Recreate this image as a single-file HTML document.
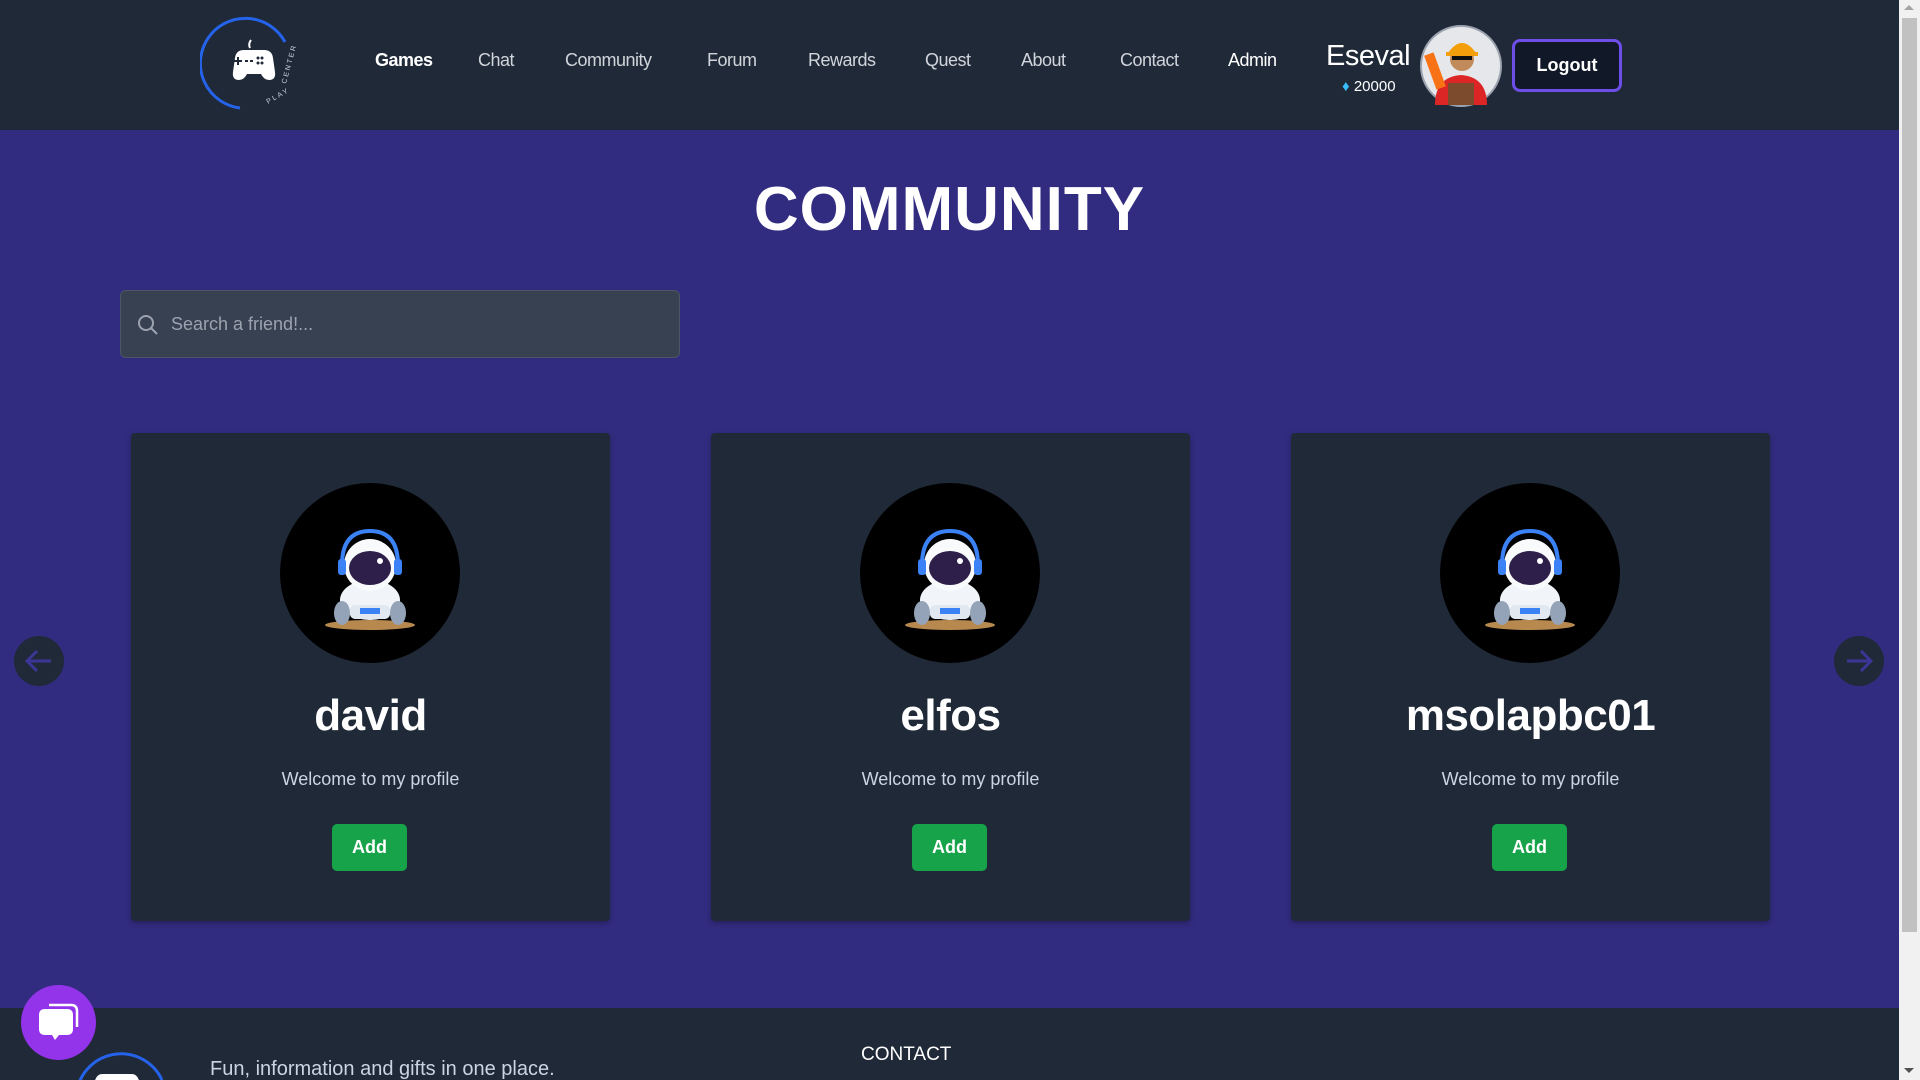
<!DOCTYPE html>
<html style="overflow:hidden;width:1920px;height:1080px"><head><meta charset="utf-8"><style>
*{margin:0;padding:0;box-sizing:border-box}
body{width:1920px;height:1080px;overflow:hidden;background:#322c80;font-family:"Liberation Sans",sans-serif;position:relative}
.hdr{position:absolute;left:0;top:0;width:1899px;height:130px;background:#1f2937}
.nav{position:absolute;top:50px;font-size:18px;color:#d1d5db;letter-spacing:-0.5px}
.nav.b{color:#fff;font-weight:bold}
.card{position:absolute;top:433px;width:479px;height:488px;background:#1f2937;border-radius:4px;box-shadow:0 2px 6px rgba(0,0,0,.3)}
.av{position:absolute;left:149px;top:50px;width:180px;height:180px;border-radius:50%;background:#000;overflow:hidden}
.nm{position:absolute;top:258px;width:100%;text-align:center;color:#fff;font-size:44px;font-weight:bold;letter-spacing:-0.5px}
.wl{position:absolute;top:336px;width:100%;text-align:center;color:#cbd5e1;font-size:18px}
.add{position:absolute;left:201px;top:391px;width:75px;height:47px;background:#16a34a;border-radius:5px;color:#fff;font-weight:bold;font-size:18px;text-align:center;line-height:47px}
.arr{position:absolute;top:636px;width:50px;height:50px;border-radius:50%;background:#1f2937}
</style></head><body>
<div class="hdr">
<svg style="position:absolute;left:200px;top:14px" width="100" height="100" viewBox="0 0 100 100">
<path d="M 85 28 A 45 45 0 1 0 40 94" fill="none" stroke="#2563eb" stroke-width="3"/>
<text x="68" y="90" fill="#cbd5e1" font-size="7" font-family="Liberation Sans" letter-spacing="2" transform="rotate(-30 68 90)">PLAY</text>
<text x="86" y="70" fill="#cbd5e1" font-size="7" font-family="Liberation Sans" letter-spacing="2" transform="rotate(-75 86 70)">CENTER</text>
<path d="M50 34 q-2 -4 1 -8" stroke="#fff" stroke-width="2" fill="none"/>
<path d="M36 36 h28 q8 0 9 8 l2 14 q1 8 -6 8 q-5 0 -8 -6 h-14 q-3 6 -8 6 q-7 0 -6 -8 l2 -14 q1 -8 9 -8z" fill="#fff"/>
<path d="M34 47 h8 M38 43 v8" stroke="#1f2937" stroke-width="2"/>
<rect x="45" y="46" width="3" height="2" fill="#1f2937"/><rect x="50" y="46" width="3" height="2" fill="#1f2937"/>
<circle cx="58" cy="44" r="1.5" fill="#1f2937"/><circle cx="62" cy="44" r="1.5" fill="#1f2937"/><circle cx="58" cy="49" r="1.5" fill="#1f2937"/><circle cx="62" cy="49" r="1.5" fill="#1f2937"/>
</svg>
<div class="nav b" style="left:375px">Games</div>
<div class="nav" style="left:478px">Chat</div>
<div class="nav" style="left:565px">Community</div>
<div class="nav" style="left:707px">Forum</div>
<div class="nav" style="left:808px">Rewards</div>
<div class="nav" style="left:925px">Quest</div>
<div class="nav" style="left:1021px">About</div>
<div class="nav" style="left:1120px">Contact</div>
<div class="nav" style="left:1228px;color:#fff">Admin</div>
<div style="position:absolute;left:1326px;top:40px;color:#fff;font-size:29px;letter-spacing:-0.5px">Eseval</div>
<div style="position:absolute;left:1342px;top:78px;color:#fff;font-size:15px"><span style="color:#38bdf8">&#9830;</span> 20000</div>
<svg style="position:absolute;left:1420px;top:25px" width="82" height="82" viewBox="0 0 82 82">
<circle cx="41" cy="41" r="40" fill="#e5e7eb" stroke="#9ca3af" stroke-width="2"/>
<path d="M15 80 q0 -28 26 -30 q26 2 26 30z" fill="#dc2626"/>
<path d="M28 80 v-22 h26 v22z" fill="#7c4a2d"/>
<circle cx="42" cy="34" r="12" fill="#c08a5b"/>
<path d="M28 28 q14 -20 28 0z" fill="#f59e0b"/><rect x="26" y="27" width="32" height="4" fill="#f59e0b"/>
<rect x="32" y="31" width="20" height="4" fill="#111"/>
<rect x="10" y="28" width="10" height="36" fill="#f97316" transform="rotate(-20 15 46)"/>
</svg>
<div style="position:absolute;left:1512px;top:39px;width:110px;height:53px;border-radius:8px;border:3px solid #6d4ee8;background:#111827;color:#fff;font-weight:bold;font-size:18px;text-align:center;line-height:47px">Logout</div>
</div>

<div style="position:absolute;left:0;top:174px;width:1899px;text-align:center;color:#fff;font-size:62px;font-weight:bold;letter-spacing:1px;line-height:72px">COMMUNITY</div>

<div style="position:absolute;left:120px;top:290px;width:560px;height:68px;background:#374151;border:1px solid #4b5563;border-radius:6px">
<svg style="position:absolute;left:15px;top:22px" width="24" height="24" viewBox="0 0 24 24"><circle cx="10" cy="10" r="7" fill="none" stroke="#9ca3af" stroke-width="2"/><path d="M15 15l6 6" stroke="#9ca3af" stroke-width="2"/></svg>
<div style="position:absolute;left:50px;top:23px;color:#9ca3af;font-size:18px">Search a friend!...</div>
</div>

<svg width="0" height="0" style="position:absolute"><defs><g id="astro">
<ellipse cx="90" cy="142" rx="45" ry="5" fill="#b8894e"/>
<ellipse cx="90" cy="117" rx="30" ry="20" fill="#f1f5f9"/>
<rect x="70" y="122" width="40" height="14" rx="5" fill="#e2e8f0"/><rect x="80" y="125" width="20" height="6" fill="#3b82f6"/>
<ellipse cx="62" cy="130" rx="8" ry="12" fill="#94a3b8"/><ellipse cx="118" cy="130" rx="8" ry="12" fill="#94a3b8"/>
<circle cx="90" cy="82" r="26" fill="#f8fafc"/>
<ellipse cx="90" cy="85" rx="21" ry="17" fill="#2e1f4a"/>
<path d="M62 82 q0 -34 28 -34 q28 0 28 34" fill="none" stroke="#3b82f6" stroke-width="4"/>
<rect x="58" y="76" width="8" height="16" rx="3" fill="#3b82f6"/><rect x="114" y="76" width="8" height="16" rx="3" fill="#3b82f6"/>
<circle cx="100" cy="78" r="3" fill="#fff"/>
</g></defs></svg>

<div class="card" style="left:131px"><div class="av"><svg width="180" height="180"><use href="#astro"/></svg></div><div class="nm">david</div><div class="wl">Welcome to my profile</div><div class="add">Add</div></div>
<div class="card" style="left:711px"><div class="av"><svg width="180" height="180"><use href="#astro"/></svg></div><div class="nm">elfos</div><div class="wl">Welcome to my profile</div><div class="add">Add</div></div>
<div class="card" style="left:1291px"><div class="av"><svg width="180" height="180"><use href="#astro"/></svg></div><div class="nm">msolapbc01</div><div class="wl">Welcome to my profile</div><div class="add">Add</div></div>

<div class="arr" style="left:14px"><svg width="50" height="50" viewBox="0 0 50 50"><path d="M37 25H14M23 15l-10 10 10 10" fill="none" stroke="#3b3596" stroke-width="3"/></svg></div>
<div class="arr" style="left:1834px"><svg width="50" height="50" viewBox="0 0 50 50"><path d="M13 25h23M27 15l10 10-10 10" fill="none" stroke="#3b3596" stroke-width="3"/></svg></div>

<div style="position:absolute;left:0;top:1008px;width:1899px;height:72px;background:#1f2937;overflow:hidden">
<svg style="position:absolute;left:72px;top:32px" width="100" height="40" viewBox="0 0 100 40"><path d="M5 50 A 45 45 0 0 1 90 40" fill="none" stroke="#2563eb" stroke-width="3"/><path d="M30 34 h30 q6 0 8 10 h-46 q2 -10 8 -10z" fill="#fff"/></svg>
<div style="position:absolute;left:210px;top:50px;color:#cbd5e1;font-size:20px">Fun, information and gifts in one place.</div>
<div style="position:absolute;left:861px;top:36px;color:#fff;font-size:19px">CONTACT</div>
</div>

<div style="position:absolute;left:21px;top:985px;width:75px;height:75px;border-radius:50%;background:#9333ea">
<svg width="75" height="75" viewBox="0 0 75 75"><path d="M24 24 h22 q6 0 6 6 v14 q0 6 -6 6 h-8 l-4 5 -3 -5 h-7 q-6 0 -6 -6 v-14 q0 -6 6 -6z" fill="#fff"/><path d="M28 20 h22 q6 0 6 6 v16" fill="none" stroke="#fff" stroke-width="2.5"/></svg>
</div>

<div style="position:absolute;left:1899px;top:0;width:21px;height:1080px;background:#f1f1f1">
<div style="position:absolute;left:3px;top:18px;width:15px;height:914px;background:#c1c1c1"></div>
<div style="position:absolute;left:5px;top:5px;border:5px solid transparent;border-bottom-color:#a3a3a3;border-top:0"></div>
<div style="position:absolute;left:5px;top:1068px;border:5px solid transparent;border-top-color:#505050;border-bottom:0"></div>
</div>
</body></html>
